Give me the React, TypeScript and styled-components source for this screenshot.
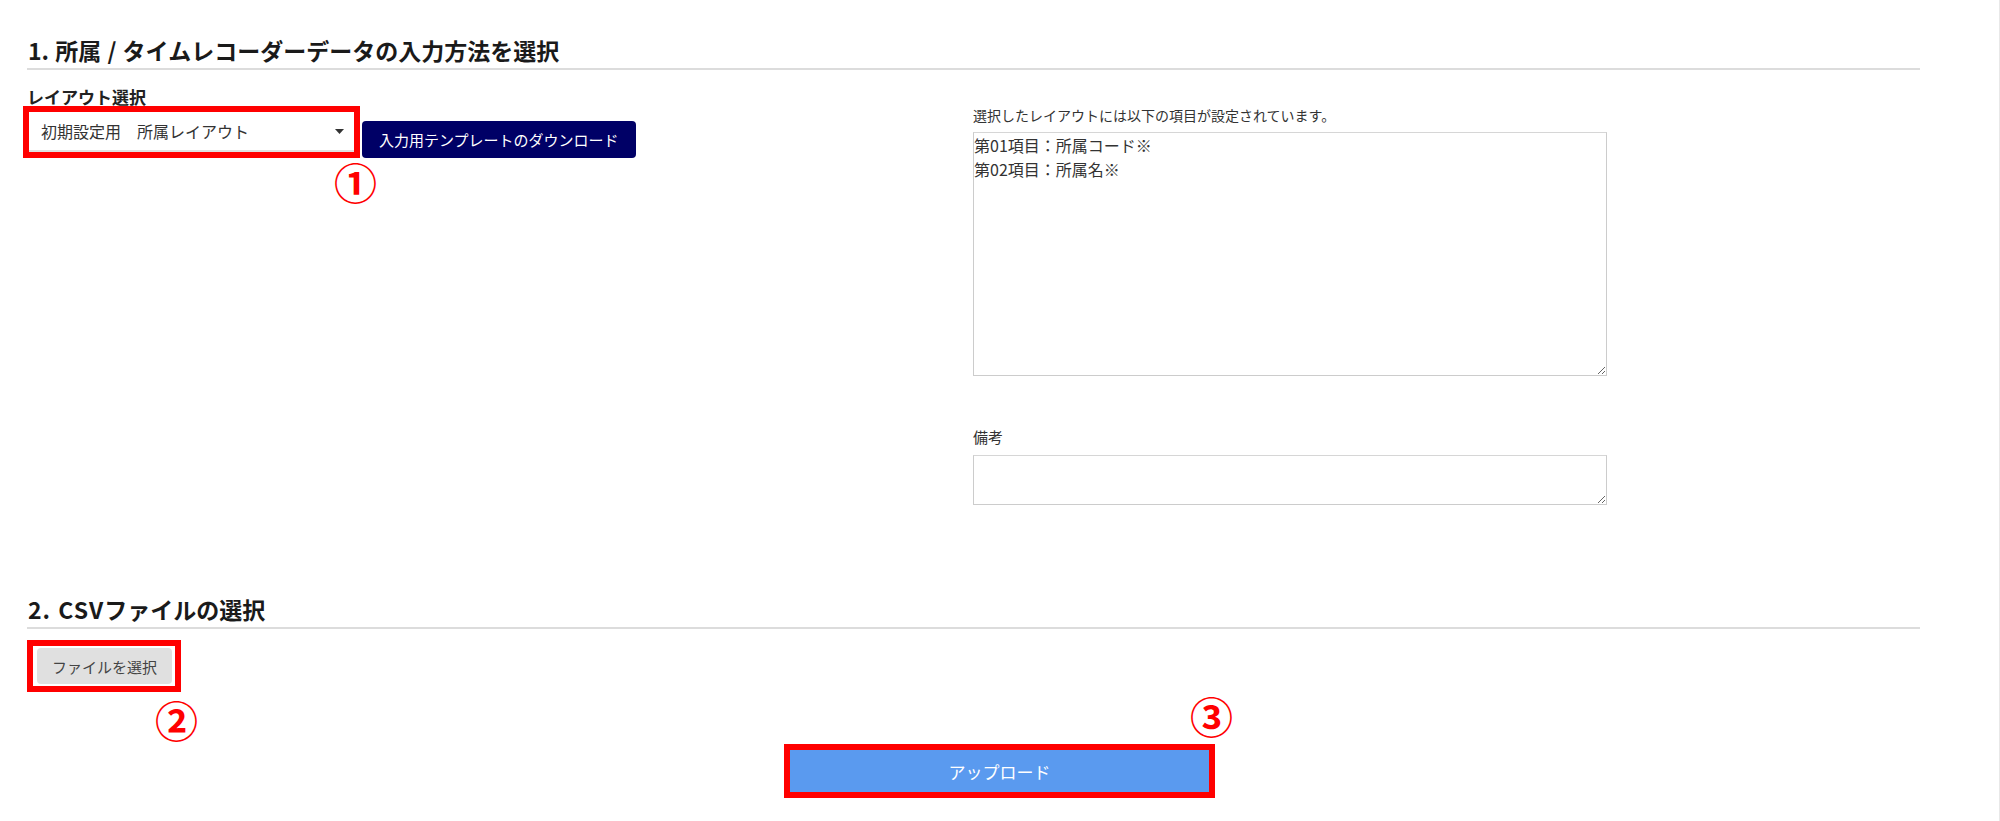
import React from "react";
import styled, { createGlobalStyle } from "styled-components";

const GlobalStyle = createGlobalStyle`
  html, body {
    margin: 0;
    padding: 0;
    background: #ffffff;
  }
  body {
    font-family: "Noto Sans CJK JP", "Noto Sans", "Liberation Sans", sans-serif;
    color: #333333;
  }
  * { box-sizing: border-box; }
`;

const Page = styled.div`
  width: 100%;
  min-height: 821px;
  padding: 35px 27px 0 27px;
  border-right: 1px solid #e8e8e8;
`;

const SectionTitle = styled.h2<{ $mt?: number }>`
  margin: ${(p) => p.$mt ?? 0}px 0 0 0;
  max-width: 1893px;
  font-size: 23px;
  line-height: 30px;
  font-weight: 700;
  word-spacing: 1px;
  color: #1a1a1a;
  padding: 0 0 3px 1px;
  border-bottom: 2px solid #dcdcdc;
`;

const Latin = styled.span`
  letter-spacing: 1px;
`;

const SplitRow = styled.div`
  display: grid;
  grid-template-columns: 946px 634px;
`;

const LeftColumn = styled.div`
  padding-top: 18px;
`;

const RightColumn = styled.div`
  padding-top: 35px;
`;

const FieldLabel = styled.div`
  font-size: 17px;
  line-height: 18px;
  font-weight: 700;
  color: #222222;
`;

const ControlRow = styled.div`
  display: flex;
  align-items: flex-end;
  gap: 2px;
  margin-left: -4px;
`;

const Highlight = styled.div<{ $pad?: string }>`
  position: relative;
  display: inline-flex;
  border: 6px solid #ff0000;
  padding: ${(p) => p.$pad ?? "0"};
`;

const Callout = styled.span<{ $left: number; $top: number }>`
  position: absolute;
  left: ${(p) => p.$left}px;
  top: ${(p) => p.$top}px;
  font-size: 43px;
  line-height: 40px;
  font-weight: 700;
  color: #ff0000;
  white-space: nowrap;
  pointer-events: none;
`;

const SelectWrap = styled.div`
  position: relative;
  width: 325px;
  height: 40px;
`;

const LayoutSelect = styled.select`
  appearance: none;
  -webkit-appearance: none;
  display: block;
  width: 100%;
  height: 40px;
  border: 0;
  border-bottom: 2px solid #e0e0e0;
  border-radius: 0;
  background: #ffffff;
  padding: 0 30px 0 12px;
  font-family: inherit;
  font-size: 16px;
  color: #333333;
  outline: none;
`;

const SelectArrow = styled.svg`
  position: absolute;
  right: 10px;
  top: 17px;
  width: 9px;
  height: 5px;
  pointer-events: none;
`;

const DownloadButton = styled.button`
  height: 37px;
  padding: 0 17px;
  border: 0;
  border-radius: 4px;
  background: #000066;
  color: #ffffff;
  font-family: inherit;
  font-size: 15px;
  cursor: pointer;
`;

const HintText = styled.div`
  font-size: 14px;
  line-height: 20px;
  color: #333333;
  margin-bottom: 7px;
`;

const NoteLabel = styled.div`
  margin-top: 50px;
  margin-bottom: 7px;
  font-size: 15px;
  line-height: 22px;
  color: #333333;
`;

const TextBox = styled.textarea<{ $h: number }>`
  display: block;
  width: 634px;
  height: ${(p) => p.$h}px;
  margin: 0;
  padding: 0;
  border: 1px solid #cccccc;
  border-top-color: #d6d6d6;
  background: #ffffff;
  font-family: inherit;
  font-size: 16px;
  line-height: 24px;
  color: #333333;
  outline: none;
`;

const FileRow = styled.div`
  margin-top: 11px;
`;

const FileButton = styled.button`
  width: 135px;
  height: 36px;
  border: 0;
  border-radius: 4px;
  background: #e0e0e0;
  color: #444444;
  font-family: inherit;
  font-size: 15px;
  cursor: pointer;
`;

const UploadRow = styled.div`
  display: flex;
  justify-content: center;
  margin-top: 52px;
`;

const UploadButton = styled.button`
  width: 419px;
  height: 42px;
  border: 0;
  background: #5a9aef;
  color: #ffffff;
  font-family: inherit;
  font-size: 17px;
  cursor: pointer;
`;

export default function App() {
  return (
    <>
      <GlobalStyle />
      <Page>
        <SectionTitle>1. 所属 / タイムレコーダーデータの入力方法を選択</SectionTitle>
        <SplitRow>
          <LeftColumn>
            <FieldLabel>レイアウト選択</FieldLabel>
            <ControlRow>
              <Highlight>
                <SelectWrap>
                  <LayoutSelect defaultValue="dept">
                    <option value="dept">初期設定用　所属レイアウト</option>
                  </LayoutSelect>
                  <SelectArrow viewBox="0 0 9 5">
                    <path d="M0 0 L9 0 L4.5 5 Z" fill="#333333" />
                  </SelectArrow>
                </SelectWrap>
                <Callout $left={305} $top={49}>①</Callout>
              </Highlight>
              <DownloadButton>入力用テンプレートのダウンロード</DownloadButton>
            </ControlRow>
          </LeftColumn>
          <RightColumn>
            <HintText>選択したレイアウトには以下の項目が設定されています。</HintText>
            <TextBox
              $h={244}
              readOnly
              defaultValue={"第01項目：所属コード※\n第02項目：所属名※"}
            />
            <NoteLabel>備考</NoteLabel>
            <TextBox $h={50} />
          </RightColumn>
        </SplitRow>

        <SectionTitle $mt={89}>
          <Latin>2. CSV</Latin>ファイルの選択
        </SectionTitle>
        <FileRow>
          <Highlight $pad="2px 3px 2px 4px">
            <FileButton>ファイルを選択</FileButton>
            <Callout $left={122} $top={53}>②</Callout>
          </Highlight>
        </FileRow>

        <UploadRow>
          <Highlight>
            <UploadButton>アップロード</UploadButton>
            <Callout $left={400} $top={-55}>③</Callout>
          </Highlight>
        </UploadRow>
      </Page>
    </>
  );
}
